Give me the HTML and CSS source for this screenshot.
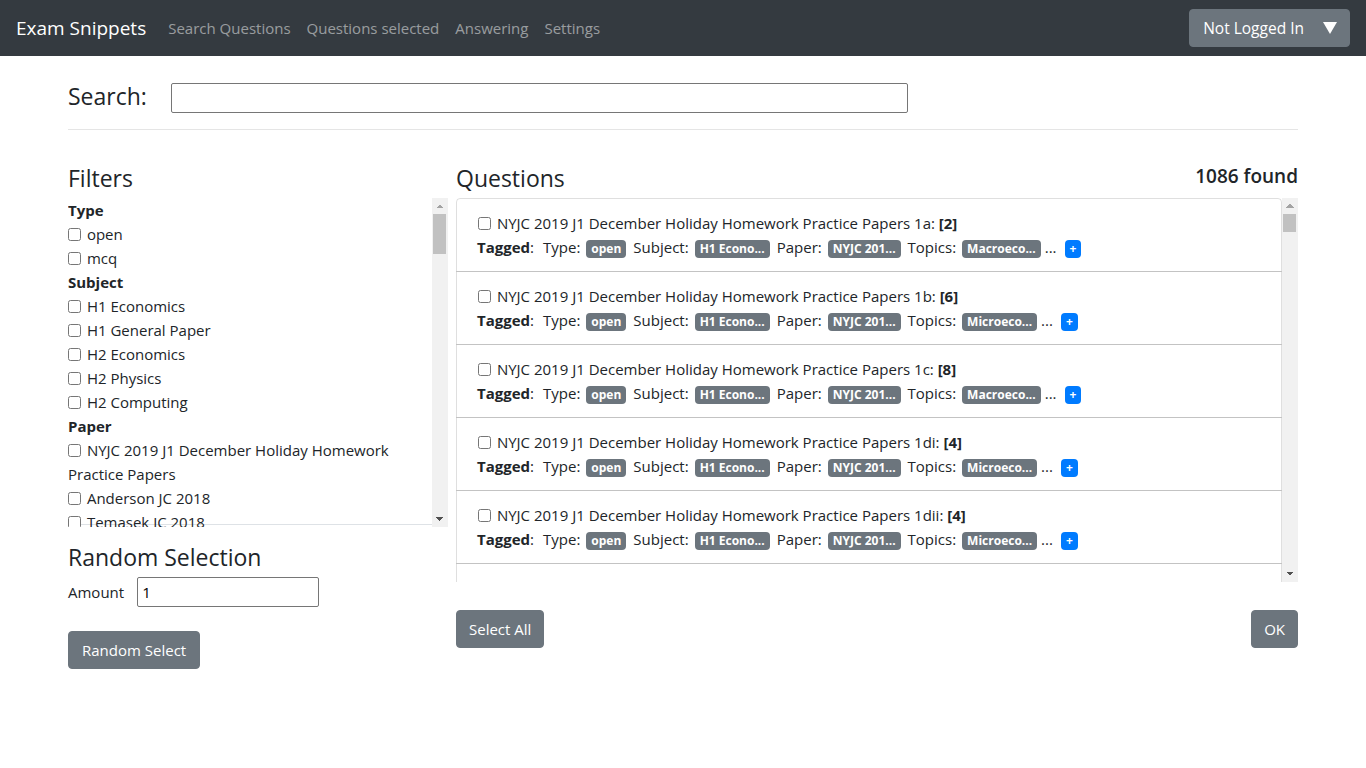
FILE: index.html
```html
<!DOCTYPE html>
<html lang="en">
<head>
<meta charset="utf-8">
<title>Exam Snippets</title>
<link rel="stylesheet" href="styles.css">
</head>
<body>
<nav class="navbar">
  <a class="brand" href="#">Exam Snippets</a>
  <ul class="nav-links">
    <li><a href="#">Search Questions</a></li>
    <li><a href="#">Questions selected</a></li>
    <li><a href="#">Answering</a></li>
    <li><a href="#">Settings</a></li>
  </ul>
  <button class="btn btn-secondary user-btn">Not Logged In <span class="tri"></span></button>
</nav>

<main class="main">
  <div class="search-row">
    <label class="search-label" for="q">Search:</label>
    <input id="q" class="search-input" type="text">
  </div>
  <hr class="divider">

  <div class="cols">
    <section class="filters">
      <h4 class="heading">Filters</h4>
      <div class="scroll-wrap filter-wrap">
        <div class="filter-box">
          <div class="group-title">Type</div>
          <label class="opt"><input type="checkbox"> open</label>
          <label class="opt"><input type="checkbox"> mcq</label>
          <div class="group-title">Subject</div>
          <label class="opt"><input type="checkbox"> H1 Economics</label>
          <label class="opt"><input type="checkbox"> H1 General Paper</label>
          <label class="opt"><input type="checkbox"> H2 Economics</label>
          <label class="opt"><input type="checkbox"> H2 Physics</label>
          <label class="opt"><input type="checkbox"> H2 Computing</label>
          <div class="group-title">Paper</div>
          <label class="opt"><input type="checkbox"> NYJC 2019 J1 December Holiday Homework Practice Papers</label>
          <label class="opt"><input type="checkbox"> Anderson JC 2018</label>
          <label class="opt"><input type="checkbox"> Temasek JC 2018</label>
          <label class="opt"><input type="checkbox"> Victoria JC 2018</label>
        </div>
        <div class="vscroll" aria-hidden="true">
          <span class="sb-btn sb-up"></span>
          <span class="sb-thumb filter-thumb"></span>
          <span class="sb-fill"></span>
          <span class="sb-btn sb-down"></span>
        </div>
      </div>
      <h4 class="heading random-heading">Random Selection</h4>
      <div class="amount-row">
        <label for="amt">Amount</label>
        <input id="amt" class="amount-input" type="text" value="1">
      </div>
      <button class="btn btn-secondary random-btn">Random Select</button>
    </section>

    <section class="questions">
      <div class="q-header">
        <h4 class="heading">Questions</h4>
        <h5 class="found">1086 found</h5>
      </div>
      <div class="scroll-wrap q-wrap">
        <ul class="list-group">
          <li class="item">
            <div class="q-title"><input type="checkbox"> NYJC 2019 J1 December Holiday Homework Practice Papers 1a: <b>[2]</b></div>
            <div class="q-tags"><b>Tagged</b>:<span class="lbl">Type:</span><span class="badge">open</span><span class="lbl">Subject:</span><span class="badge">H1 Econo...</span><span class="lbl">Paper:</span><span class="badge">NYJC 201...</span><span class="lbl">Topics:</span><span class="badge">Macroeco...</span><span class="more">...</span><span class="badge badge-plus">+</span></div>
          </li>
          <li class="item">
            <div class="q-title"><input type="checkbox"> NYJC 2019 J1 December Holiday Homework Practice Papers 1b: <b>[6]</b></div>
            <div class="q-tags"><b>Tagged</b>:<span class="lbl">Type:</span><span class="badge">open</span><span class="lbl">Subject:</span><span class="badge">H1 Econo...</span><span class="lbl">Paper:</span><span class="badge">NYJC 201...</span><span class="lbl">Topics:</span><span class="badge">Microeco...</span><span class="more">...</span><span class="badge badge-plus">+</span></div>
          </li>
          <li class="item">
            <div class="q-title"><input type="checkbox"> NYJC 2019 J1 December Holiday Homework Practice Papers 1c: <b>[8]</b></div>
            <div class="q-tags"><b>Tagged</b>:<span class="lbl">Type:</span><span class="badge">open</span><span class="lbl">Subject:</span><span class="badge">H1 Econo...</span><span class="lbl">Paper:</span><span class="badge">NYJC 201...</span><span class="lbl">Topics:</span><span class="badge">Macroeco...</span><span class="more">...</span><span class="badge badge-plus">+</span></div>
          </li>
          <li class="item">
            <div class="q-title"><input type="checkbox"> NYJC 2019 J1 December Holiday Homework Practice Papers 1di: <b>[4]</b></div>
            <div class="q-tags"><b>Tagged</b>:<span class="lbl">Type:</span><span class="badge">open</span><span class="lbl">Subject:</span><span class="badge">H1 Econo...</span><span class="lbl">Paper:</span><span class="badge">NYJC 201...</span><span class="lbl">Topics:</span><span class="badge">Microeco...</span><span class="more">...</span><span class="badge badge-plus">+</span></div>
          </li>
          <li class="item">
            <div class="q-title"><input type="checkbox"> NYJC 2019 J1 December Holiday Homework Practice Papers 1dii: <b>[4]</b></div>
            <div class="q-tags"><b>Tagged</b>:<span class="lbl">Type:</span><span class="badge">open</span><span class="lbl">Subject:</span><span class="badge">H1 Econo...</span><span class="lbl">Paper:</span><span class="badge">NYJC 201...</span><span class="lbl">Topics:</span><span class="badge">Microeco...</span><span class="more">...</span><span class="badge badge-plus">+</span></div>
          </li>
          <li class="item">
            <div class="q-title"><input type="checkbox"> NYJC 2019 J1 December Holiday Homework Practice Papers 1e: <b>[6]</b></div>
            <div class="q-tags"><b>Tagged</b>:<span class="lbl">Type:</span><span class="badge">open</span><span class="lbl">Subject:</span><span class="badge">H1 Econo...</span><span class="lbl">Paper:</span><span class="badge">NYJC 201...</span><span class="lbl">Topics:</span><span class="badge">Macroeco...</span><span class="more">...</span><span class="badge badge-plus">+</span></div>
          </li>
        </ul>
        <div class="vscroll" aria-hidden="true">
          <span class="sb-btn sb-up"></span>
          <span class="sb-thumb q-thumb"></span>
          <span class="sb-fill"></span>
          <span class="sb-btn sb-down"></span>
        </div>
      </div>
      <div class="q-actions">
        <button class="btn btn-secondary">Select All</button>
        <button class="btn btn-secondary">OK</button>
      </div>
    </section>
  </div>
</main>
</body>
</html>
```

FILE: styles.css
```css
* { box-sizing: border-box; }
html, body { margin: 0; padding: 0; }
body {
  font-family: "Open Sans", "Noto Sans", sans-serif;
  font-size: 15px;
  line-height: 24px;
  color: #212529;
  background: #fff;
}

.navbar {
  height: 56px;
  background: #343a40;
  display: flex;
  align-items: center;
  padding: 0 16px;
}
.brand {
  color: #fff;
  text-decoration: none;
  font-size: 19px;
  line-height: 30px;
  margin-right: 14px;
}
.nav-links {
  list-style: none;
  margin: 0;
  padding: 0;
  display: flex;
  flex: 1;
}
.nav-links a {
  display: block;
  padding: 8px 8px;
  color: rgba(255,255,255,.5);
  text-decoration: none;
  font-size: 15px;
}

.btn {
  font-family: inherit;
  font-size: 15px;
  line-height: 24px;
  padding: 6px 12px;
  border: 1px solid #6c757d;
  border-radius: 4px;
  cursor: pointer;
}
.btn-secondary {
  background: #6c757d;
  color: #fff;
}
.user-btn {
  display: flex;
  align-items: center;
  padding: 6px 12px 6px 13px;
  font-size: 15.5px;
}
.tri {
  display: inline-block;
  width: 0;
  height: 0;
  margin-left: 19px;
  border-left: 7px solid transparent;
  border-right: 7px solid transparent;
  border-top: 12px solid #fff;
}

.main {
  padding: 0 68px;
}
.search-row {
  display: flex;
  align-items: center;
  padding-top: 27px;
}
.search-label {
  font-size: 23px;
  font-weight: 500;
  line-height: 26px;
  width: 103px;
  margin-bottom: 4px;
}
.search-input {
  width: 737px;
  height: 30px;
  border: 1px solid #767676;
  border-radius: 2px;
  font-family: inherit;
  font-size: 15px;
}
.divider {
  margin: 16px 0 0;
  border: 0;
  border-top: 1px solid rgba(0,0,0,.1);
}

.cols {
  display: flex;
  gap: 8px;
  padding-top: 34px;
}
.filters {
  width: 380px;
  flex: none;
}
.questions {
  flex: 1;
  min-width: 0;
}
.heading {
  font-size: 23px;
  font-weight: 500;
  line-height: 29px;
  margin: 0 0 5px;
}

/* scroll areas with a drawn scrollbar */
.scroll-wrap {
  display: flex;
}
.filter-wrap {
  height: 329px;
}
.q-wrap {
  height: 384px;
}
.vscroll {
  width: 16px;
  flex: none;
  display: flex;
  flex-direction: column;
  background: #f1f1f1;
}
.sb-btn {
  display: block;
  height: 16px;
  flex: none;
}
.sb-up {
  background:
    linear-gradient(to top left, #a3a3a3 50%, transparent 50%) 4px 6px / 4px 4px no-repeat,
    linear-gradient(to top right, #a3a3a3 50%, transparent 50%) 8px 6px / 4px 4px no-repeat;
}
.sb-down {
  background:
    linear-gradient(to bottom left, #505050 50%, transparent 50%) 4px 6px / 4px 4px no-repeat,
    linear-gradient(to bottom right, #505050 50%, transparent 50%) 8px 6px / 4px 4px no-repeat;
}
.sb-thumb {
  display: block;
  flex: none;
  margin: 0 2px 0 1px;
  background: #c1c1c1;
}
.filter-thumb { height: 40px; }
.q-thumb { height: 18px; }
.sb-fill {
  flex: 1;
}

.filter-box {
  flex: 1;
  overflow: hidden;
  background: linear-gradient(#dee2e6, #dee2e6) left bottom 2px / 100% 1px no-repeat;
}
.group-title {
  font-weight: 700;
}
.opt {
  display: block;
}
.opt input, .q-title input {
  width: 13px;
  height: 13px;
  margin: 0 2px 0 0;
  vertical-align: -1px;
}
.random-heading {
  margin-top: 16px;
  margin-bottom: 5px;
}
.amount-row {
  display: flex;
  align-items: center;
  gap: 13px;
}
.amount-input {
  width: 182px;
  height: 30px;
  border: 1px solid #767676;
  border-radius: 2px;
  font-family: inherit;
  font-size: 15px;
  padding: 1px 4px;
}
.random-btn {
  margin-top: 24px;
  padding-left: 13px;
  padding-right: 13px;
}

.q-header {
  display: flex;
  justify-content: space-between;
  align-items: flex-start;
}
.found {
  font-size: 19px;
  font-weight: 600;
  margin: 0;
  line-height: 24px;
}
.list-group {
  flex: 1;
  min-width: 0;
  overflow: hidden;
  list-style: none;
  margin: 0;
  padding: 0;
}
.item {
  border: 1px solid rgba(0,0,0,.125);
  margin-bottom: -1px;
  padding: 12px 20px;
}
.item:first-child {
  border-top-left-radius: 4px;
  border-top-right-radius: 4px;
}
.q-title {
  white-space: nowrap;
}
.q-title input {
  margin-left: 1px;
}
.q-tags {
  white-space: nowrap;
}
.lbl {
  margin-left: 7px;
}
.q-tags .lbl:first-of-type {
  margin-left: 9px;
}
.badge {
  display: inline-block;
  background: #6c757d;
  color: #fff;
  font-size: 12px;
  font-weight: 700;
  line-height: 1;
  padding: 3px 5px;
  border-radius: 4px;
  margin-left: 6px;
}
.more {
  margin-left: 4px;
}
.badge-plus {
  background: #007bff;
  padding: 3px 5px;
  margin-left: 8px;
}
.q-actions {
  display: flex;
  justify-content: space-between;
  margin-top: 28px;
}
```
